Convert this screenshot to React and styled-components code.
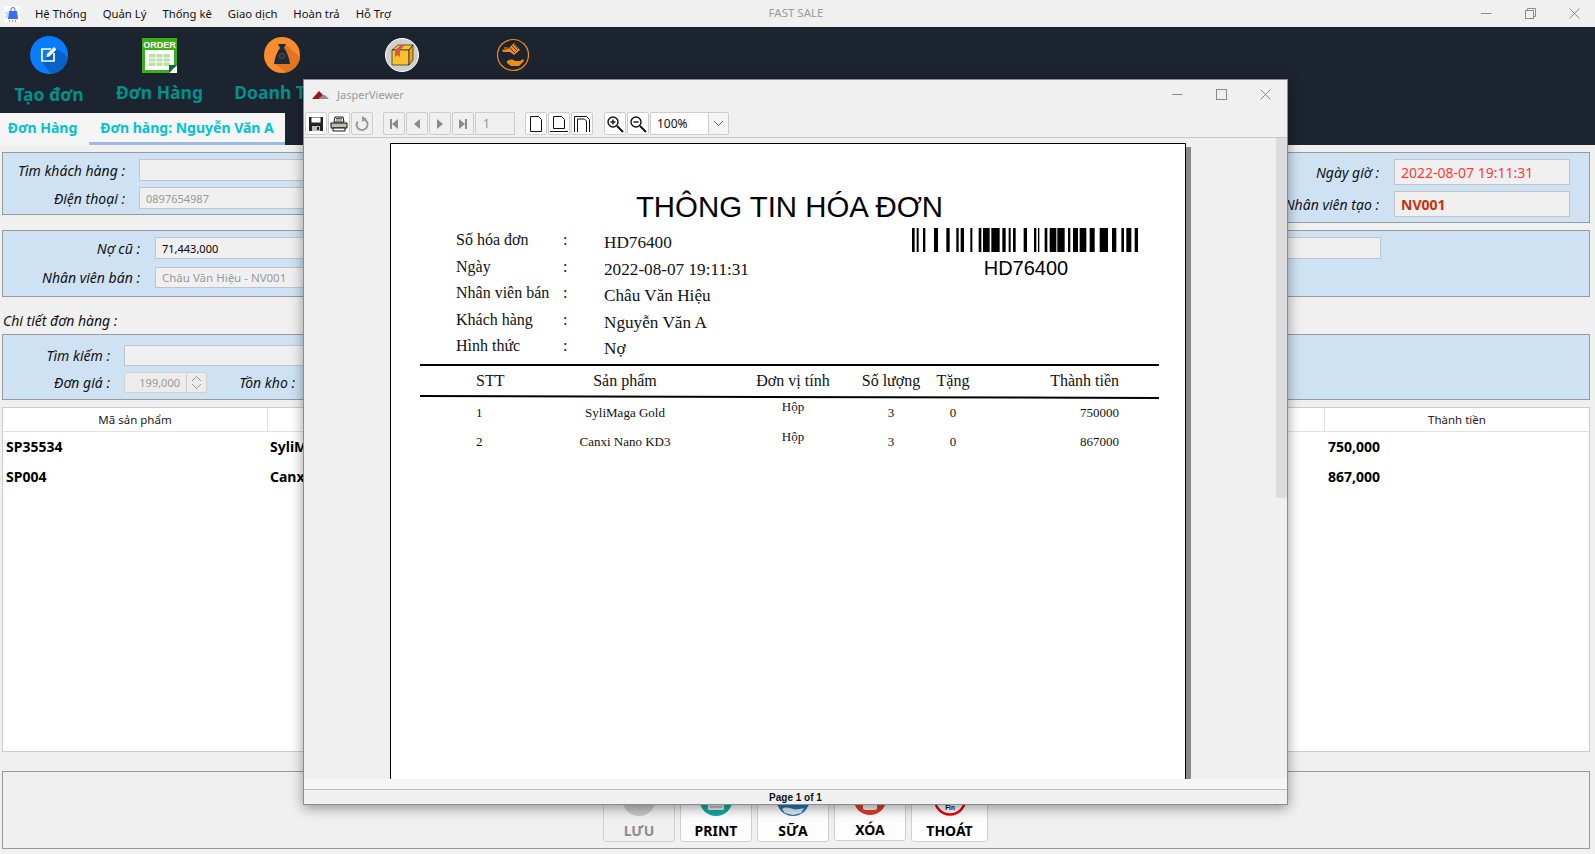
import styled, { createGlobalStyle } from 'styled-components';

const uiFont = '"Noto Sans", "Open Sans", sans-serif';
const serif = '"Liberation Serif", serif';
const arial = '"Liberation Sans", sans-serif';

const GlobalStyle = createGlobalStyle`
  html, body {
    margin: 0;
    padding: 0;
    background: #f0f0f0;
  }
  * {
    box-sizing: border-box;
  }
`;

const Screen = styled.div`
  position: relative;
  width: 1595px;
  height: 854px;
  overflow: hidden;
  background: #f0f0f0;
  font-family: ${uiFont};
  color: #000;
`;

/* ---------- top menu ---------- */
const MenuBar = styled.div`
  display: grid;
  grid-template-columns: 1fr auto 1fr;
  align-items: center;
  height: 27px;
  background: #f0f0f0;
`;

const MenuLeft = styled.div`
  display: flex;
  align-items: center;
  padding-left: 4px;
`;

const MenuList = styled.div`
  display: flex;
  gap: 16px;
  margin-left: 15px;
  font-size: 11.3px;
  color: #111;
`;

const AppTitle = styled.div`
  font-size: 11.5px;
  color: #9a9a9a;
  padding: 0 3px 3px 0;
`;

const WinControls = styled.div`
  display: flex;
  justify-content: flex-end;
  gap: ${(p) => p.$gap}px;
  padding-right: ${(p) => p.$right}px;
  color: #8a8a8a;
`;

/* ---------- dark header ---------- */
const Header = styled.div`
  height: 118px;
  background: #1c2430;
  display: flex;
  flex-direction: column;
`;

const ToolRow = styled.div`
  display: flex;
  height: 86px;
  padding-top: 9px;
`;

const Tool = styled.div`
  width: ${(p) => p.$width}px;
  display: flex;
  flex-direction: column;
  align-items: center;
`;

const ToolIcon = styled.div`
  height: 38px;
  display: flex;
  align-items: center;
  justify-content: center;
`;

const ToolLabel = styled.div`
  margin-top: ${(p) => p.$gap}px;
  font-size: 17.5px;
  line-height: 22px;
  font-weight: 700;
  color: #038f8f;
  white-space: nowrap;
`;

const TabStrip = styled.div`
  display: flex;
  width: 285px;
  height: 32px;
  background: #f5f5f5;
`;

const Tab = styled.div`
  width: ${(p) => p.$width}px;
  padding-right: ${(p) => p.$right || 0}px;
  display: flex;
  align-items: center;
  justify-content: center;
  font-size: 14px;
  font-weight: 700;
  color: #00c4d0;
  border-bottom: 3px solid ${(p) => (p.$active ? '#9dbbe0' : 'transparent')};
  white-space: nowrap;
`;

/* ---------- form panels ---------- */
const Content = styled.div`
  padding: 0 5px 0 2px;
`;

const TopPanels = styled.div`
  display: flex;
  align-items: flex-start;
  justify-content: space-between;
  margin-top: 7px;
`;

const Panel = styled.div`
  background: #cfe2f3;
  border: 1px solid #979b9f;
`;

const CustomerPanel = styled(Panel)`
  width: 800px;
  height: 63px;
  padding-top: 6px;
  display: flex;
  flex-direction: column;
  gap: 6px;
`;

const InvoicePanel = styled(Panel)`
  width: 780px;
  height: 71px;
  padding: 6px 19px 0 0;
  display: flex;
  flex-direction: column;
  gap: 6px;
`;

const DebtPanel = styled(Panel)`
  margin-top: 7px;
  height: 67px;
  padding-top: 6px;
  display: flex;
  justify-content: space-between;
`;

const DetailPanel = styled(Panel)`
  height: 66px;
  padding-top: 10px;
  display: flex;
  flex-direction: column;
  gap: 6px;
`;

const Stack = styled.div`
  display: flex;
  flex-direction: column;
  gap: 8px;
`;

const Row = styled.div`
  display: flex;
  align-items: center;
  height: ${(p) => p.$height || 22}px;
  justify-content: ${(p) => (p.$end ? 'flex-end' : 'flex-start')};
`;

const Label = styled.div`
  width: ${(p) => p.$width}px;
  margin-right: ${(p) => p.$gap ?? 14}px;
  margin-left: ${(p) => p.$left || 0}px;
  display: flex;
  justify-content: flex-end;
  font-size: 14px;
  font-style: italic;
  color: #111;
  white-space: nowrap;
`;

const Field = styled.div`
  width: ${(p) => p.$width}px;
  height: ${(p) => p.$height || 22}px;
  margin-right: ${(p) => p.$right || 0}px;
  padding-left: 6px;
  display: flex;
  align-items: center;
  background: #f0f0f0;
  border: 1px solid #c0c4c8;
  font-size: ${(p) => p.$size || 11}px;
  color: ${(p) => p.$color || '#999'};
  font-weight: ${(p) => (p.$bold ? 700 : 400)};
  white-space: nowrap;
`;

const Spinner = styled.div`
  width: 83px;
  height: 21px;
  display: flex;
  background: #ececec;
  border: 1px solid #d0d0d0;
  border-radius: 2px;
  font-size: 11px;
  color: #999;
`;

const SpinValue = styled.div`
  width: 62px;
  padding-right: 6px;
  text-align: right;
  line-height: 19px;
  border-right: 1px solid #d0d0d0;
`;

const SpinArrows = styled.div`
  flex: 1;
  display: flex;
  align-items: center;
  justify-content: center;
`;

const Caption = styled.div`
  height: 37px;
  padding: 9px 0 0 1px;
  display: flex;
  align-items: center;
  font-size: 14px;
  font-style: italic;
  color: #111;
`;

/* ---------- product table ---------- */
const ProductTable = styled.div`
  margin-top: 7px;
  height: 345px;
  background: #fff;
  border: 1px solid #cccccc;
`;

const TableHead = styled.div`
  display: grid;
  grid-template-columns: 264px 1fr 265px;
  height: 24px;
  border-bottom: 1px solid #e2e2e2;
`;

const HeadCell = styled.div`
  display: flex;
  align-items: center;
  justify-content: center;
  font-size: 11.5px;
  color: #222;
  border-left: ${(p) => (p.$line ? '1px solid #e2e2e2' : 'none')};
`;

const TableRow = styled.div`
  display: grid;
  grid-template-columns: 264px 1fr 265px;
  height: 30px;
  padding-bottom: 2px;
  align-items: center;
  font-size: 14px;
  font-weight: 700;
`;

const Cell = styled.div`
  padding-left: ${(p) => p.$pad || 3}px;
  white-space: nowrap;
`;

/* ---------- bottom buttons ---------- */
const ActionPanel = styled.div`
  margin-top: 19px;
  height: 78px;
  border: 1px solid #999;
  display: flex;
  justify-content: center;
  align-items: flex-end;
  gap: 5px;
  padding: 0 1px 6px 0;
`;

const ActionButton = styled.div`
  width: ${(p) => p.$width || 72}px;
  height: 62px;
  margin-bottom: ${(p) => p.$lift || 0}px;
  display: flex;
  flex-direction: column;
  align-items: center;
  padding-top: 2px;
  background: ${(p) => (p.$disabled ? '#f0f0f0' : '#fdfdfd')};
  border: 1px solid #cfcfcf;
  border-radius: 3px;
  font-size: 14px;
  font-weight: 700;
  line-height: 20px;
  color: ${(p) => (p.$disabled ? '#8c8c8c' : '#000')};
`;

const ActionIcon = styled.div`
  height: 33px;
  margin-bottom: 5px;
`;

/* ---------- jasper viewer dialog ---------- */
const Viewer = styled.div`
  position: absolute;
  left: 303px;
  top: 79px;
  width: 985px;
  height: 726px;
  display: flex;
  flex-direction: column;
  background: #f0f0f0;
  border: 1px solid #8d8d8d;
  box-shadow: 0 3px 12px rgba(0, 0, 0, 0.4);
`;

const ViewerTitle = styled.div`
  height: 32px;
  flex-shrink: 0;
  display: flex;
  align-items: center;
  justify-content: space-between;
  padding: 0 0 3px 8px;
`;

const ViewerName = styled.div`
  display: flex;
  align-items: center;
  gap: 8px;
  font-size: 11px;
  color: #9a9a9a;
`;

const Toolbar = styled.div`
  height: 26px;
  flex-shrink: 0;
  display: flex;
  padding: 0 0 2px 1px;
  gap: 1px;
  border-bottom: 1px solid #c6c6c6;
`;

const ToolButton = styled.div`
  width: 22px;
  height: 23px;
  margin-left: ${(p) => p.$left || 0}px;
  display: flex;
  align-items: center;
  justify-content: center;
  background: ${(p) => (p.$off ? '#f0f0f0' : '#fff')};
  border: 1px solid #cdcdcd;
  border-radius: 2px;
`;

const PageInput = styled.div`
  width: 40px;
  height: 23px;
  padding-left: 7px;
  background: #f0f0f0;
  border: 1px solid #cdcdcd;
  font-size: 12px;
  line-height: 21px;
  color: #999;
`;

const ZoomCombo = styled.div`
  width: 79px;
  height: 23px;
  display: flex;
  background: #fff;
  border: 1px solid #cdcdcd;
  border-radius: 2px;
  font-size: 12px;
  line-height: 21px;
  color: #111;
`;

const ZoomValue = styled.div`
  width: 58px;
  padding-left: 6px;
  border-right: 1px solid #cdcdcd;
`;

const ZoomArrow = styled.div`
  flex: 1;
  display: flex;
  align-items: center;
  justify-content: center;
  background: #f4f4f4;
`;

const ViewerBody = styled.div`
  flex: 1;
  min-height: 0;
  display: flex;
`;

const PageArea = styled.div`
  flex: 1;
  overflow: hidden;
  padding: 5px 0 0 86px;
`;

const ScrollTrack = styled.div`
  width: 11px;
  background: #f0f0f0;
`;

const ScrollThumb = styled.div`
  height: 360px;
  background: #dcdcdc;
`;

const Strip = styled.div`
  height: 10px;
  flex-shrink: 0;
  background: #f6f6f6;
`;

const StatusBar = styled.div`
  height: 15px;
  flex-shrink: 0;
  border-top: 1px solid #bdbdbd;
  display: flex;
  align-items: center;
  justify-content: center;
  font-family: ${arial};
  font-size: 10px;
  font-weight: 700;
  color: #111;
`;

/* ---------- printed invoice ---------- */
const Page = styled.div`
  width: 796px;
  height: 900px;
  padding-top: 46px;
  background: #fff;
  border: 1px solid #000;
  box-shadow: 5px 4px 0 #888;
`;

const DocTitle = styled.div`
  padding-left: 3px;
  height: 34px;
  text-align: center;
  font-family: ${arial};
  font-size: 29.4px;
  line-height: 34px;
  color: #000;
`;

const InfoBlock = styled.div`
  margin-top: 3px;
  display: flex;
  align-items: flex-start;
`;

const InfoGrid = styled.div`
  margin-left: 65px;
  display: grid;
  grid-template-columns: 107px 41px 200px;
  grid-auto-rows: 26.5px;
  font-family: ${serif};
  color: #111;
`;

const InfoLabel = styled.div`
  font-size: 16px;
  line-height: 26px;
  white-space: nowrap;
`;

const InfoValue = styled.div`
  margin-top: 3px;
  font-size: 17.2px;
  line-height: 26px;
  white-space: nowrap;
`;

const BarcodeBlock = styled.div`
  margin-left: auto;
  margin-right: 45px;
  padding-top: 1px;
  width: 228px;
  text-align: center;
  font-family: ${arial};
  font-size: 20px;
  line-height: 20px;
`;

const BarcodeText = styled.div`
  margin-top: 3px;
`;

const Rule = styled.div`
  margin: ${(p) => p.$top || 0}px 0 ${(p) => p.$bottom || 0}px 29px;
  width: 739px;
  height: 2px;
  background: #000;
  transform: rotate(${(p) => p.$tilt || 0}deg);
`;

const DocRow = styled.div`
  margin-left: 29px;
  display: grid;
  grid-template-columns: 90px 230px 106px 90px 34px 149px;
  align-items: center;
  height: ${(p) => p.$height}px;
  font-family: ${serif};
  font-size: ${(p) => p.$size}px;
  color: #111;
`;

const DocCell = styled.div`
  text-align: ${(p) => p.$align || 'center'};
  padding-left: ${(p) => p.$pad || 0}px;
  padding-bottom: ${(p) => p.$raise || 0}px;
  white-space: nowrap;
`;

/* ---------- icons ---------- */
const AppLogo = () => (
  <svg width="16" height="16" viewBox="0 0 16 16">
    <rect width="16" height="16" fill="#fff" />
    <path d="M5 5h8l1 8H4z" fill="#3b6df0" />
    <path d="M7 5V3.500a2 2 0 0 1 4 0V5" fill="none" stroke="#3b6df0" />
    <path d="M1 7h3M2 9h2M1 11h3" stroke="#8fb6f5" />
    <path d="M5 15h1M8 15h1M11 15h1" stroke="#333" />
  </svg>
);

const Minimize = () => (
  <svg width="11" height="11" viewBox="0 0 11 11">
    <path d="M0 5.500h10.500" stroke="currentColor" />
  </svg>
);

const Restore = () => (
  <svg width="11" height="11" viewBox="0 0 11 11" fill="none" stroke="currentColor">
    <rect x="0.5" y="2.5" width="8" height="8" />
    <path d="M2.500 2.500v-2h8v8h-2" />
  </svg>
);

const Maximize = () => (
  <svg width="11" height="11" viewBox="0 0 11 11" fill="none" stroke="currentColor">
    <rect x="0.5" y="0.5" width="10" height="10" />
  </svg>
);

const CloseX = () => (
  <svg width="11" height="11" viewBox="0 0 11 11" stroke="currentColor">
    <path d="M0.500 0.500l10 10M10.500 0.500l-10 10" />
  </svg>
);

const EditIcon = () => (
  <svg width="38" height="38" viewBox="0 0 38 38">
    <circle cx="19" cy="19" r="19" fill="#0a7cff" />
    <path d="M12 26l14-14 12 9a19 19 0 0 1-17 17z" fill="#0a62c8" />
    <path d="M21 13h-9v12h12v-8" fill="none" stroke="#fff" strokeWidth="1.7" />
    <path d="M17 18l7-7 2.500 2.500-7 7-3 .5z" fill="#fff" />
  </svg>
);

const OrderIcon = () => (
  <svg width="35" height="35" viewBox="0 0 35 35">
    <rect width="35" height="35" fill="#3cae1c" />
    <text x="17.5" y="10" textAnchor="middle" fontFamily={arial} fontWeight="700" fontSize="9" fill="#fff">
      ORDER
    </text>
    <rect x="3" y="12" width="29" height="20" fill="#fff" />
    <path d="M7 16h21v12H7z" fill="#b9e3a6" />
    <path d="M7 20h21M7 24h21M14 16v12M21 16v12" stroke="#fff" />
    <path d="M35 27v8h-8z" fill="#fff" />
    <path d="M27 35l8-8h-8z" fill="#0c6b35" />
  </svg>
);

const MoneyIcon = () => (
  <svg width="36" height="36" viewBox="0 0 36 36">
    <circle cx="18" cy="18" r="18" fill="#f98c2c" />
    <path d="M22 8l14 12a18 18 0 0 1-14 15.500L10 26z" fill="#e57420" />
    <path d="M14 7h8l-2 4c3 4 5 9 6 16H10c1-7 3-12 6-16z" fill="#20293a" />
    <circle cx="18" cy="19" r="2.500" fill="none" stroke="#3d6b40" />
  </svg>
);

const BoxIcon = () => (
  <svg width="34" height="34" viewBox="0 0 34 34">
    <circle cx="17" cy="17" r="16.500" fill="#cfcfcf" stroke="#fff" />
    <path d="M7 12l6-5h15l-4 5z" fill="#f6c933" stroke="#222" strokeWidth="0.7" />
    <path d="M7 12h17v15H7z" fill="#fbc02d" stroke="#222" strokeWidth="0.7" />
    <path d="M24 12l4-5v15l-4 5z" fill="#e8a520" stroke="#222" strokeWidth="0.7" />
    <path d="M10 12l6-5h4l-5 5v7l-2.500-2-2.500 2z" fill="#d9534f" />
  </svg>
);

const HandIcon = () => (
  <svg width="34" height="34" viewBox="0 0 34 34" fill="none">
    <circle cx="17" cy="17" r="15.500" stroke="#f08a10" strokeWidth="1.200" />
    <path d="M6 12l6-1 6-6 6 7-6 5-4-3-7 0z" fill="#f08a10" />
    <path d="M14 10l5 5M16 8l5 5M18 6l4 5" stroke="#1c2430" strokeWidth="0.8" />
    <path d="M8 10h4M8 13h3" stroke="#f08a10" />
    <path d="M11 23c3-2 6-2 8 0h5l3-2 1 2-5 5h-8l-4-3z" fill="#f08a10" />
  </svg>
);

const SaveDisk = () => (
  <svg width="16" height="16" viewBox="0 0 16 16">
    <path d="M1 1h14v14H1z" fill="#222" />
    <path d="M3.500 1.500h9v5h-9z" fill="#fff" />
    <path d="M4 10h8v5H4z" fill="#bbb" />
    <path d="M9 11h2v3H9z" fill="#222" />
  </svg>
);

const PrinterIcon = () => (
  <svg width="18" height="16" viewBox="0 0 18 16">
    <path d="M5 1h8l1 5H4z" fill="#fff" stroke="#111" />
    <path d="M6 2.500h6M6 4h6" stroke="#111" strokeWidth="0.7" />
    <path d="M1 7h16v5H1z" fill="#bbb" stroke="#111" />
    <path d="M3 12h12v3H3z" fill="#fff" stroke="#111" />
    <path d="M10 9h3" stroke="#e8c500" />
  </svg>
);

const ReloadIcon = () => (
  <svg width="16" height="16" viewBox="0 0 16 16" fill="none">
    <path d="M9.500 3.200a5.500 5.500 0 1 1-6 2.300" stroke="#999" strokeWidth="2" />
    <path d="M8 0l5 3-5 3z" fill="#999" />
  </svg>
);

const NavIcon = ({ type }) => (
  <svg width="12" height="12" viewBox="0 0 12 12" fill="#8a8a8a">
    {type === 'first' && <path d="M2 1h2v10H2zM10 1v10L4 6z" />}
    {type === 'prev' && <path d="M9 1v10L3 6z" />}
    {type === 'next' && <path d="M3 1v10l6-5z" />}
    {type === 'last' && <path d="M8 1h2v10H8zM2 1v10l6-5z" />}
  </svg>
);

const PageIcon = ({ type }) => (
  <svg width="20" height="18" viewBox="0 0 20 18" fill="none" stroke="#111">
    {type === 'actual' && <path d="M4.500 1.500h8l3 3v12h-11z" />}
    {type === 'width' && <path d="M4.500 1.500h8l3 3v9h-11zM1 16.500h18" />}
    {type === 'fit' && <path d="M2.500 17V1.500h12l3 3V17M5.500 17V4h7l2 2v11" />}
  </svg>
);

const ZoomIcon = ({ plus }) => (
  <svg width="18" height="18" viewBox="0 0 18 18" fill="none" stroke="#111">
    <circle cx="7" cy="7" r="5" fill="#fff" strokeWidth="1.4" />
    <path d="M4.500 7h5" strokeWidth="1.4" />
    {plus && <path d="M7 4.500v5" strokeWidth="1.4" />}
    <path d="M11 11l6 6" strokeWidth="2" />
  </svg>
);

const ChevronDown = () => (
  <svg width="11" height="7" viewBox="0 0 11 7" fill="none" stroke="#666">
    <path d="M1 1l4.500 4.500L10 1" />
  </svg>
);

const SpinIcon = () => (
  <svg width="11" height="15" viewBox="0 0 11 15" fill="none" stroke="#999">
    <path d="M1 6l4.500-4.500L10 6M1 9l4.500 4.500L10 9" />
  </svg>
);

const JasperLogo = () => (
  <svg width="17" height="8" viewBox="0 0 17 8">
    <path d="M0 8l7-8 4 4-3 4z" fill="#a01218" />
    <path d="M6 8l5-4 2 0 4 4z" fill="#8d8d8d" />
  </svg>
);

const LuuIcon = () => (
  <svg width="34" height="33" viewBox="0 0 34 33">
    <circle cx="17" cy="16.5" r="16.5" fill="#c8c8c8" />
    <circle cx="10" cy="12" r="2" fill="#eee" />
    <circle cx="24" cy="12" r="2" fill="#eee" />
  </svg>
);

const PrintIcon = () => (
  <svg width="34" height="33" viewBox="0 0 34 33">
    <circle cx="17" cy="16.5" r="16.5" fill="#12aaa2" />
    <path d="M9 16h16v11H9z" fill="#e8e8e8" />
    <path d="M11 24h12" stroke="#999" />
  </svg>
);

const SuaIcon = () => (
  <svg width="34" height="33" viewBox="0 0 34 33">
    <circle cx="17" cy="16.5" r="16.5" fill="#2577b3" />
    <path d="M6 26c4-3 8-1 11 0s7 0 11-1l-3 5-8 2-8-2z" fill="#dfe9f2" />
  </svg>
);

const XoaIcon = () => (
  <svg width="34" height="33" viewBox="0 0 34 33">
    <circle cx="17" cy="16.5" r="16.5" fill="#dc3d2e" />
    <path d="M10 14h14v12a2 2 0 0 1-2 2H12a2 2 0 0 1-2-2z" fill="#f2f2f2" />
  </svg>
);

const ThoatIcon = () => (
  <svg width="34" height="33" viewBox="0 0 34 33">
    <circle cx="17" cy="16.5" r="15" fill="#fff" stroke="#f00000" strokeWidth="2.5" />
    <text x="17" y="27" textAnchor="middle" fontFamily={arial} fontWeight="700" fontSize="6.5" fill="#111">
      Fin
    </text>
  </svg>
);

// vi tri vach lay tu anh, don vi px tren khung 720x72
const bars = [
  [22, 8], [36, 6], [55, 7], [88, 12], [125, 10], [155, 7], [168, 10], [197, 6],
  [222, 8], [235, 20], [260, 25], [293, 10], [312, 6], [325, 8], [357, 10],
  [388, 7], [400, 4], [420, 8], [435, 20], [458, 22], [490, 7], [505, 15], [525, 20],
  [555, 15], [585, 25], [622, 13], [650, 8], [665, 15], [690, 10]
];

const Barcode = () => (
  <svg width="228" height="24" viewBox="22 0 684 72" preserveAspectRatio="none">
    {bars.map(([x, w]) => (
      <rect key={x} x={x} y="0" width={w} height="72" fill="#000" />
    ))}
  </svg>
);

const menus = ['Hệ Thống', 'Quản Lý', 'Thống kê', 'Giao dịch', 'Hoàn trả', 'Hỗ Trợ'];

const info = [
  ['Số hóa đơn', 'HD76400'],
  ['Ngày', '2022-08-07 19:11:31'],
  ['Nhân viên bán', 'Châu Văn Hiệu'],
  ['Khách hàng', 'Nguyễn Văn A'],
  ['Hình thức', 'Nợ']
];

const invoiceItems = [
  { stt: 1, name: 'SyliMaga Gold', qty: 3, gift: 0, total: 750000, raise: 13 },
  { stt: 2, name: 'Canxi Nano KD3', qty: 3, gift: 0, total: 867000, raise: 11 }
];

const products = [
  { code: 'SP35534', name: 'SyliMaga Gold', total: '750,000' },
  { code: 'SP004', name: 'Canxi Nano KD3', total: '867,000' }
];

export default function App() {
  return (
    <Screen>
      <GlobalStyle />
      <MenuBar>
        <MenuLeft>
          <AppLogo />
          <MenuList>
            {menus.map((m) => (
              <span key={m}>{m}</span>
            ))}
          </MenuList>
        </MenuLeft>
        <AppTitle>FAST SALE</AppTitle>
        <WinControls $gap={33} $right={15}>
          <Minimize />
          <Restore />
          <CloseX />
        </WinControls>
      </MenuBar>

      <Header>
        <ToolRow>
          <Tool $width={98}>
            <ToolIcon><EditIcon /></ToolIcon>
            <ToolLabel $gap={9}>Tạo đơn</ToolLabel>
          </Tool>
          <Tool $width={123}>
            <ToolIcon><OrderIcon /></ToolIcon>
            <ToolLabel $gap={7}>Đơn Hàng</ToolLabel>
          </Tool>
          <Tool $width={121}>
            <ToolIcon><MoneyIcon /></ToolIcon>
            <ToolLabel $gap={7}>Doanh Thu</ToolLabel>
          </Tool>
          <Tool $width={120}>
            <ToolIcon><BoxIcon /></ToolIcon>
          </Tool>
          <Tool $width={102}>
            <ToolIcon><HandIcon /></ToolIcon>
          </Tool>
        </ToolRow>
        <TabStrip>
          <Tab $width={89} $right={4}>Đơn Hàng</Tab>
          <Tab $width={196} $active>Đơn hàng: Nguyễn Văn A</Tab>
        </TabStrip>
      </Header>

      <Content>
        <TopPanels>
          <CustomerPanel>
            <Row>
              <Label $width={122}>Tìm khách hàng :</Label>
              <Field $width={600} />
            </Row>
            <Row>
              <Label $width={122}>Điện thoại :</Label>
              <Field $width={600}>0897654987</Field>
            </Row>
          </CustomerPanel>
          <InvoicePanel>
            <Row $height={26} $end>
              <Label $width={120} $gap={15}>Ngày giờ :</Label>
              <Field $width={176} $height={26} $size={14} $color="#ff3b2f">
                2022-08-07 19:11:31
              </Field>
            </Row>
            <Row $height={26} $end>
              <Label $width={120} $gap={15}>Nhân viên tạo :</Label>
              <Field $width={176} $height={26} $size={14} $color="#c8320a" $bold>
                NV001
              </Field>
            </Row>
          </InvoicePanel>
        </TopPanels>

        <DebtPanel>
          <Stack>
            <Row>
              <Label $width={137} $gap={15}>Nợ cũ :</Label>
              <Field $width={400} $color="#000">71,443,000</Field>
            </Row>
            <Row $height={21}>
              <Label $width={137} $gap={15}>Nhân viên bán :</Label>
              <Field $width={400} $height={21} $size={11.5}>Châu Văn Hiệu - NV001</Field>
            </Row>
          </Stack>
          <Field $width={300} $right={208} />
        </DebtPanel>

        <Caption>Chi tiết đơn hàng :</Caption>

        <DetailPanel>
          <Row $height={21}>
            <Label $width={107}>Tìm kiếm :</Label>
            <Field $width={500} $height={21} />
          </Row>
          <Row $height={21}>
            <Label $width={107}>Đơn giá :</Label>
            <Spinner>
              <SpinValue>199,000</SpinValue>
              <SpinArrows><SpinIcon /></SpinArrows>
            </Spinner>
            <Label $width={56} $left={32}>Tồn kho :</Label>
          </Row>
        </DetailPanel>

        <ProductTable>
          <TableHead>
            <HeadCell>Mã sản phẩm</HeadCell>
            <HeadCell $line />
            <HeadCell $line>Thành tiền</HeadCell>
          </TableHead>
          {products.map((p) => (
            <TableRow key={p.code}>
              <Cell>{p.code}</Cell>
              <Cell $pad={3}>{p.name}</Cell>
              <Cell $pad={4}>{p.total}</Cell>
            </TableRow>
          ))}
        </ProductTable>

        <ActionPanel>
          <ActionButton $disabled>
            <ActionIcon><LuuIcon /></ActionIcon>
            LƯU
          </ActionButton>
          <ActionButton>
            <ActionIcon><PrintIcon /></ActionIcon>
            PRINT
          </ActionButton>
          <ActionButton>
            <ActionIcon><SuaIcon /></ActionIcon>
            SỮA
          </ActionButton>
          <ActionButton $lift={1}>
            <ActionIcon><XoaIcon /></ActionIcon>
            XÓA
          </ActionButton>
          <ActionButton $width={77}>
            <ActionIcon><ThoatIcon /></ActionIcon>
            THOÁT
          </ActionButton>
        </ActionPanel>
      </Content>

      <Viewer>
        <ViewerTitle>
          <ViewerName>
            <JasperLogo />
            JasperViewer
          </ViewerName>
          <WinControls $gap={33} $right={16}>
            <Minimize />
            <Maximize />
            <CloseX />
          </WinControls>
        </ViewerTitle>
        <Toolbar>
          <ToolButton><SaveDisk /></ToolButton>
          <ToolButton><PrinterIcon /></ToolButton>
          <ToolButton $off><ReloadIcon /></ToolButton>
          <ToolButton $off $left={9}><NavIcon type="first" /></ToolButton>
          <ToolButton $off><NavIcon type="prev" /></ToolButton>
          <ToolButton $off><NavIcon type="next" /></ToolButton>
          <ToolButton $off><NavIcon type="last" /></ToolButton>
          <PageInput>1</PageInput>
          <ToolButton $left={9}><PageIcon type="actual" /></ToolButton>
          <ToolButton><PageIcon type="width" /></ToolButton>
          <ToolButton><PageIcon type="fit" /></ToolButton>
          <ToolButton $left={10}><ZoomIcon plus /></ToolButton>
          <ToolButton><ZoomIcon /></ToolButton>
          <ZoomCombo>
            <ZoomValue>100%</ZoomValue>
            <ZoomArrow><ChevronDown /></ZoomArrow>
          </ZoomCombo>
        </Toolbar>
        <ViewerBody>
          <PageArea>
            <Page>
              <DocTitle>THÔNG TIN HÓA ĐƠN</DocTitle>
              <InfoBlock>
                <InfoGrid>
                  {info.map(([label, value]) => [
                    <InfoLabel key={label}>{label}</InfoLabel>,
                    <InfoLabel key={`${label}-c`}>:</InfoLabel>,
                    <InfoValue key={value}>{value}</InfoValue>
                  ])}
                </InfoGrid>
                <BarcodeBlock>
                  <Barcode />
                  <BarcodeText>HD76400</BarcodeText>
                </BarcodeBlock>
              </InfoBlock>
              <Rule $top={4} />
              <DocRow $height={30} $size={16}>
                <DocCell $align="left" $pad={56}>STT</DocCell>
                <DocCell>Sản phẩm</DocCell>
                <DocCell>Đơn vị tính</DocCell>
                <DocCell>Số lượng</DocCell>
                <DocCell>Tặng</DocCell>
                <DocCell $align="right">Thành tiền</DocCell>
              </DocRow>
              <Rule $tilt={0.15} $bottom={1} />
              {invoiceItems.map((item) => (
                <DocRow key={item.stt} $height={29} $size={13}>
                  <DocCell $align="left" $pad={56}>{item.stt}</DocCell>
                  <DocCell>{item.name}</DocCell>
                  <DocCell $raise={item.raise}>Hộp</DocCell>
                  <DocCell>{item.qty}</DocCell>
                  <DocCell>{item.gift}</DocCell>
                  <DocCell $align="right">{item.total}</DocCell>
                </DocRow>
              ))}
            </Page>
          </PageArea>
          <ScrollTrack>
            <ScrollThumb />
          </ScrollTrack>
        </ViewerBody>
        <Strip />
        <StatusBar>Page 1 of 1</StatusBar>
      </Viewer>
    </Screen>
  );
}
